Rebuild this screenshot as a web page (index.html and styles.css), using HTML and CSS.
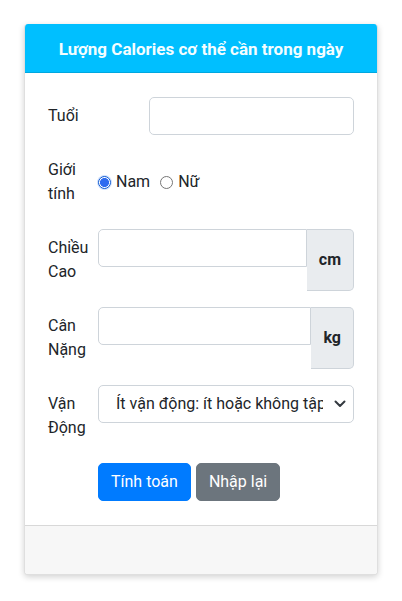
FILE: index.html
```html
<!DOCTYPE html>
<html lang="vi">
<head>
<meta charset="utf-8">
<title>Lượng Calories</title>
<link rel="stylesheet" href="styles.css">
</head>
<body>
<div class="card">
  <div class="card-header">Lượng Calories cơ thể cần trong ngày</div>
  <form class="card-body">
    <div class="row">
      <label class="label label-wide">Tuổi</label>
      <div class="field"><input class="control" type="text"></div>
    </div>
    <div class="row">
      <label class="label">Giới tính</label>
      <div class="field radios">
        <label class="radio"><span class="dot checked"></span>Nam</label>
        <label class="radio"><span class="dot"></span>Nữ</label>
      </div>
    </div>
    <div class="row">
      <label class="label">Chiều Cao</label>
      <div class="field group">
        <input class="control grouped" type="text">
        <span class="addon">cm</span>
      </div>
    </div>
    <div class="row">
      <label class="label">Cân Nặng</label>
      <div class="field group">
        <input class="control grouped" type="text">
        <span class="addon">kg</span>
      </div>
    </div>
    <div class="row">
      <label class="label">Vận Động</label>
      <div class="field">
        <div class="select-wrap">
          <select class="control select">
            <option>Ít vận động: ít hoặc không tập thể dục</option>
          </select>
          <svg class="chevron" width="12" height="8" viewBox="0 0 12 8"><path d="M1.5 1.5 6 6l4.5-4.5" fill="none" stroke="#343a40" stroke-width="2" stroke-linecap="round" stroke-linejoin="round"/></svg>
        </div>
      </div>
    </div>
    <div class="actions">
      <button type="button" class="btn btn-primary">Tính toán</button>
      <button type="button" class="btn btn-secondary">Nhập lại</button>
    </div>
  </form>
  <div class="card-footer"></div>
</div>
</body>
</html>
```
FILE: styles.css
```css
* { box-sizing: border-box; }
html, body { margin: 0; background: #fff; }
body {
  padding: 24px;
  font-family: Roboto, "Noto Sans", "Liberation Sans", sans-serif;
  font-size: 16px;
  line-height: 24px;
  color: #212529;
}
.card {
  border: 1px solid rgba(0,0,0,.125);
  border-top: none;
  border-radius: 4px;
  box-shadow: 0 2px 6px rgba(0,0,0,.18);
  overflow: hidden;
  background: #fff;
}
.card-header {
  background: #00bfff;
  color: #f4fdff;
  font-weight: 700;
  font-size: 17px;
  text-align: center;
  padding: 13px 16px 11px;
  border-bottom: 1px solid rgba(0,0,0,.125);
}
.card-body {
  padding: 24px 23px;
  margin: 0;
}
.row {
  display: flex;
  align-items: stretch;
  margin-bottom: 16px;
}
.label {
  flex: 0 0 50px;
  padding: 7px 0;
}
.label-wide { flex-basis: 101px; }
.field { flex: 1; min-width: 0; }
.control {
  display: block;
  width: 100%;
  height: 38px;
  border: 1px solid #ced4da;
  border-radius: 5px;
  background: #fff;
  font: inherit;
  color: #212529;
  padding: 6px 12px;
}
.radios {
  display: flex;
  align-items: center;
  gap: 10px;
}
.radio {
  display: flex;
  align-items: center;
  gap: 5px;
}
.dot {
  width: 13px;
  height: 13px;
  border-radius: 50%;
  border: 1px solid #767676;
  background: #fff;
}
.dot.checked {
  border: 1px solid #0b57d0;
  background: radial-gradient(circle, #2f6bf0 0 4.2px, #fff 4.8px);
  box-shadow: 0 0 0 1px #cfe0ff;
}
.group { display: flex; align-items: stretch; }
.group .grouped {
  flex: 1;
  min-width: 0;
  border-radius: 5px 0 0 5px;
}
.addon {
  display: flex;
  align-items: center;
  padding: 0 12px;
  background: #e9ecef;
  border: 1px solid #ced4da;
  border-left: none;
  border-radius: 0 5px 5px 0;
  font-weight: 700;
  color: #212529;
}
.select-wrap { position: relative; }
.select {
  appearance: none;
  -webkit-appearance: none;
  padding: 6px 30px 6px 17px;
  white-space: nowrap;
  overflow: hidden;
}
.chevron {
  position: absolute;
  right: 8px;
  top: 15px;
  pointer-events: none;
}
.actions {
  display: flex;
  gap: 5px;
  padding-left: 50px;
}
.btn {
  font: inherit;
  border: 1px solid transparent;
  border-radius: 5px;
  padding: 6px 12px;
  color: #fff;
  line-height: 24px;
}
.btn-primary { background: #007bff; border-color: #007bff; }
.btn-secondary { background: #6c757d; border-color: #6c757d; }
.card-footer {
  height: 49px;
  background: #f7f7f7;
  border-top: 1px solid rgba(0,0,0,.125);
}
```
